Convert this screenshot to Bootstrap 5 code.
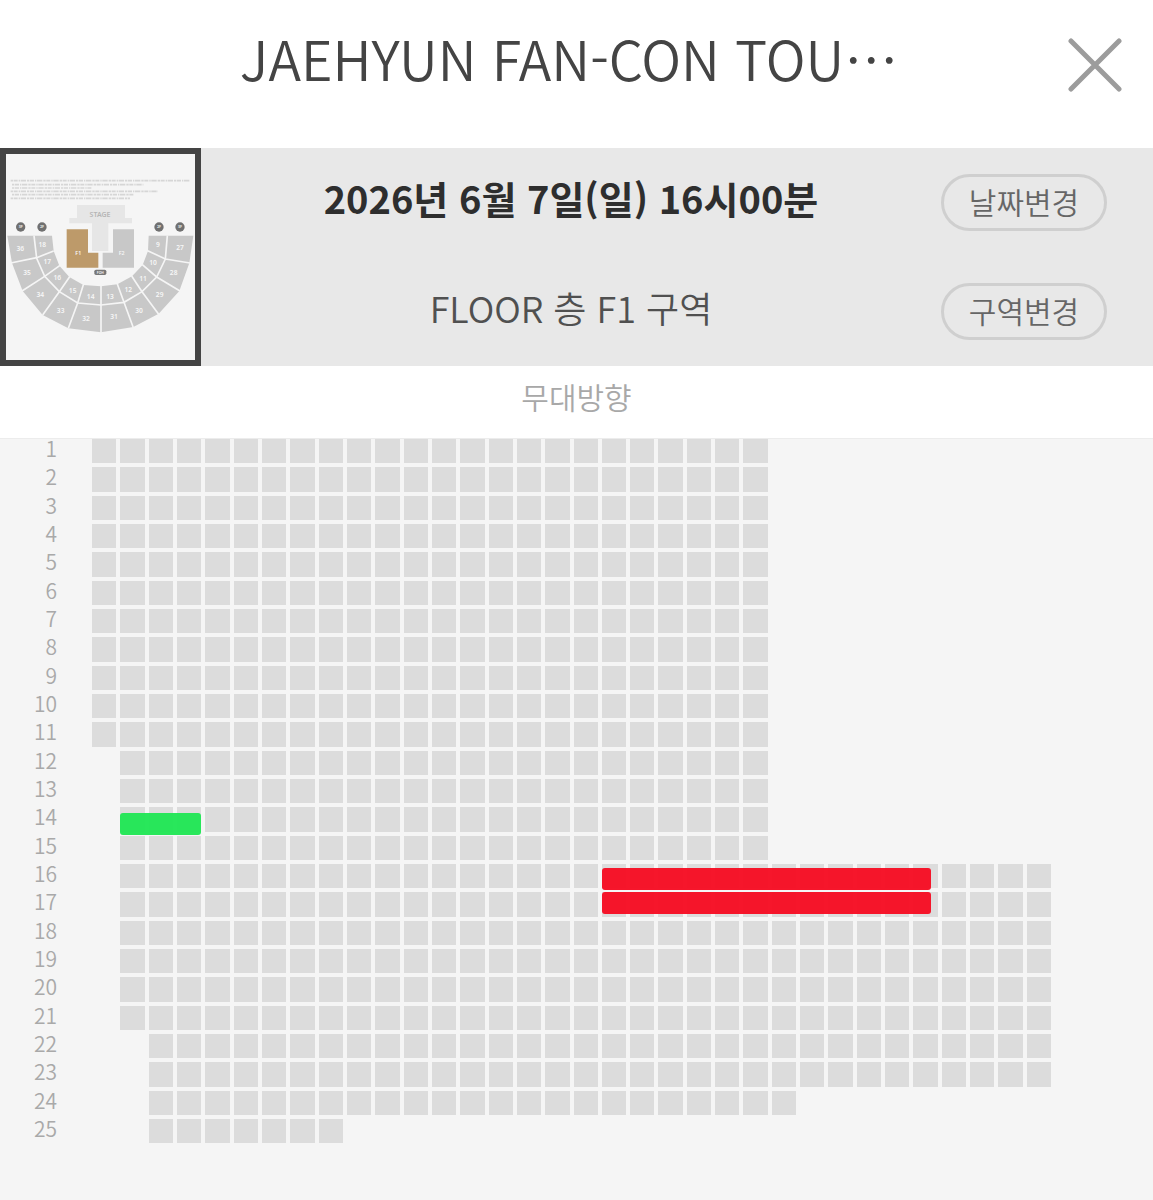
<!DOCTYPE html>
<html lang="ko">
<head>
<meta charset="utf-8">
<meta name="viewport" content="width=device-width, initial-scale=1">
<title>JAEHYUN FAN-CON TOUR</title>
<link href="https://cdn.jsdelivr.net/npm/bootstrap@5.3.0/dist/css/bootstrap.min.css" rel="stylesheet">
<style>
  body { font-family: "Noto Sans CJK KR", "Noto Sans", sans-serif; font-weight: 350; background: #f5f5f5; color: #444; }
  .page-head { display: grid; grid-template-columns: 115px 1fr 130px; height: 148px; padding-bottom: 18px; }
  .page-title { font-size: 54px; line-height: 64px; font-weight: 350; color: #444; padding-bottom: 14px; }
  .close-btn { width: 72px; height: 72px; margin-right: 22px; }
  .info-bar { background: #e8e8e8; height: 218px; }
  .thumb { width: 201px; border: 6px solid #444; background: #f5f5f5; }
  .info-line { height: 109px; line-height: 52px; }
  .show-date { font-size: 38px; font-weight: 700; color: #2e2e2e; }
  .show-zone { font-size: 36px; color: #505050; }
  .info-actions { margin-right: 46px; }
  .change-btn { width: 166px; height: 57px; border: 3px solid #cfcfcf; font-size: 30px; line-height: 44px; color: #666; font-weight: 350; }
  .change-btn.btn { padding: 0 0 4px; }
  .stage-dir { height: 72px; font-size: 30px; line-height: 60px; color: #a8a8a8; }
  .seat-board { padding: 0 102px 56px 0; border-top: 1px solid #ececec; }
  .seat-line { display: grid; grid-template-columns: 57px 1fr; column-gap: 35px; }
  .line-no { font-size: 21px; line-height: 18px; color: #a9a9a9; height: 20px; }
  .seat-grid { display: grid; grid-template-columns: repeat(34, minmax(0, 1fr)); column-gap: 4px; align-items: start; }
  .seat { grid-row: 1; aspect-ratio: 1; background: #dcdcdc; }
  .marker { grid-row: 1; z-index: 1; height: 22px; margin-bottom: -12px; border-radius: 3px; opacity: .95; }
  .marker-green { background: #1ee652; margin-top: 6px; }
  .marker-red { background: #f60a20; margin-right: 7px; }
  .marker-low { margin-top: 4px; }
</style>
<script src="https://cdn.jsdelivr.net/npm/bootstrap@5.3.0/dist/js/bootstrap.bundle.min.js"></script>
</head>
<body>
<header class="page-head bg-white align-items-center">
  <h1 class="page-title text-center text-nowrap m-0" style="grid-column:2">JAEHYUN FAN-CON TOU⋯</h1>
  <button type="button" class="close-btn btn p-0 border-0 d-flex align-items-center justify-content-center ms-auto" aria-label="닫기">
    <svg width="54" height="54" viewBox="0 0 54 54" fill="none" stroke="#9c9c9c" stroke-width="5" stroke-linecap="round"><path d="M3 3 51 51M51 3 3 51"/></svg>
  </button>
</header>

<section class="info-bar d-flex">
  <div class="thumb flex-shrink-0">
    <svg class="d-block" width="100%" height="100%" viewBox="18 27 567 618" font-family="Noto Sans" font-size="20" font-weight="600" text-anchor="middle">
      <g stroke="#d6d6d6" stroke-width="5" stroke-dasharray="7 2 12 3 4 2 16 3">
        <path d="M32 107H570"/><path d="M36 119H430"/><path d="M36 129H274"/><path d="M32 139H474"/><path d="M36 149H402"/><path d="M32 160H390"/>
      </g>
      <path fill="#e6e6e6" d="M231 180H375V219H396V235H325V318H276V235H208V219H231Z"/>
      <text x="300" y="217" fill="#b5b5b5" font-size="21">STAGE</text>
      <path fill="#bd9a6a" d="M200 253H264V323H295V368H200Z"/>
      <path fill="#c8c8c8" d="M339 253H402V368H308V323H339Z"/>
      <rect x="283" y="374" width="36" height="16" rx="5" fill="#777"/>
      <g fill="#707070"><circle cx="62" cy="246" r="14"/><circle cx="126" cy="246" r="14"/><circle cx="477" cy="246" r="14"/><circle cx="540" cy="246" r="14"/></g>
      <path fill="#c8c8c8" d="M22 272 36 354 68 438 128 510 205 550 303 562 400 546 476 506 538 438 568 354 580 272H446L444 318 428 360 396 394 352 418 303 424 250 420 208 396 178 362 161 318 156 272Z"/>
      <g fill="none" stroke="#f5f5f5" stroke-width="5">
        <path d="M102 272 110 340 134 394 178 440 233 474 303 480 372 472 426 440 470 396 496 342 502 272"/>
        <path d="M32 354 110 338 161 318M66 438 134 394 180 361M128 510 178 440 209 395M205 550 233 474 250 419M303 564V422M400 548 372 472 352 417M476 508 426 440 395 393M540 438 470 396 427 359M570 354 496 342 443 317"/>
      </g>
      <g fill="#f7f7f7">
        <text x="235" y="329" font-size="16">F1</text><text x="365" y="329" font-size="16">F2</text>
        <text x="301" y="386" font-size="10">FOH</text>
        <text x="62" y="250" font-size="11">3F</text><text x="126" y="250" font-size="11">2F</text><text x="477" y="250" font-size="11">2F</text><text x="540" y="250" font-size="11">3F</text>
        <text x="61" y="317">36</text><text x="127" y="307">18</text><text x="142" y="358">17</text><text x="81" y="391">35</text>
        <text x="172" y="405">16</text><text x="121" y="455">34</text><text x="218" y="443">15</text><text x="182" y="503">33</text>
        <text x="272" y="461">14</text><text x="258" y="529">32</text><text x="330" y="462">13</text><text x="342" y="523">31</text>
        <text x="385" y="441">12</text><text x="417" y="503">30</text><text x="429" y="408">11</text><text x="479" y="455">29</text>
        <text x="459" y="360">10</text><text x="521" y="391">28</text><text x="474" y="307">9</text><text x="540" y="316">27</text>
      </g>
    </svg>
  </div>
  <div class="flex-grow-1 text-center text-nowrap">
    <div class="info-line show-date pt-4">2026년 6월 7일(일) 16시00분</div>
    <div class="info-line show-zone pt-4">FLOOR 층 F1 구역</div>
  </div>
  <div class="info-actions flex-shrink-0">
    <div class="info-line d-flex align-items-center"><button type="button" class="change-btn btn rounded-pill">날짜변경</button></div>
    <div class="info-line d-flex align-items-center"><button type="button" class="change-btn btn rounded-pill">구역변경</button></div>
  </div>
</section>

<div class="stage-dir bg-white text-center">무대방향</div>

<main class="seat-board d-flex flex-column gap-1" id="seatBoard"></main>

<script>
  // First and last seat column of every line in the F1 block
  const lines = [
    ...Array(11).fill([1, 24]),
    ...Array(4).fill([2, 24]),
    ...Array(6).fill([2, 34]),
    ...Array(2).fill([3, 34]),
    [3, 25],
    [3, 9]
  ];
  // Highlighted seat ranges, keyed by line number
  const markers = {
    14: [2, 4, 'marker-green'],
    16: [19, 30, 'marker-red marker-low'],
    17: [19, 30, 'marker-red']
  };
  document.getElementById('seatBoard').innerHTML = lines.map(([from, to], i) => {
    let seats = '';
    for (let c = from; c <= to; c++) seats += `<span class="seat" style="grid-column:${c}"></span>`;
    const m = markers[i + 1];
    if (m) seats += `<span class="marker ${m[2]}" style="grid-column:${m[0]}/${m[1] + 1}"></span>`;
    return `<div class="seat-line"><span class="line-no text-end">${i + 1}</span><div class="seat-grid">${seats}</div></div>`;
  }).join('');
</script>
</body>
</html>
